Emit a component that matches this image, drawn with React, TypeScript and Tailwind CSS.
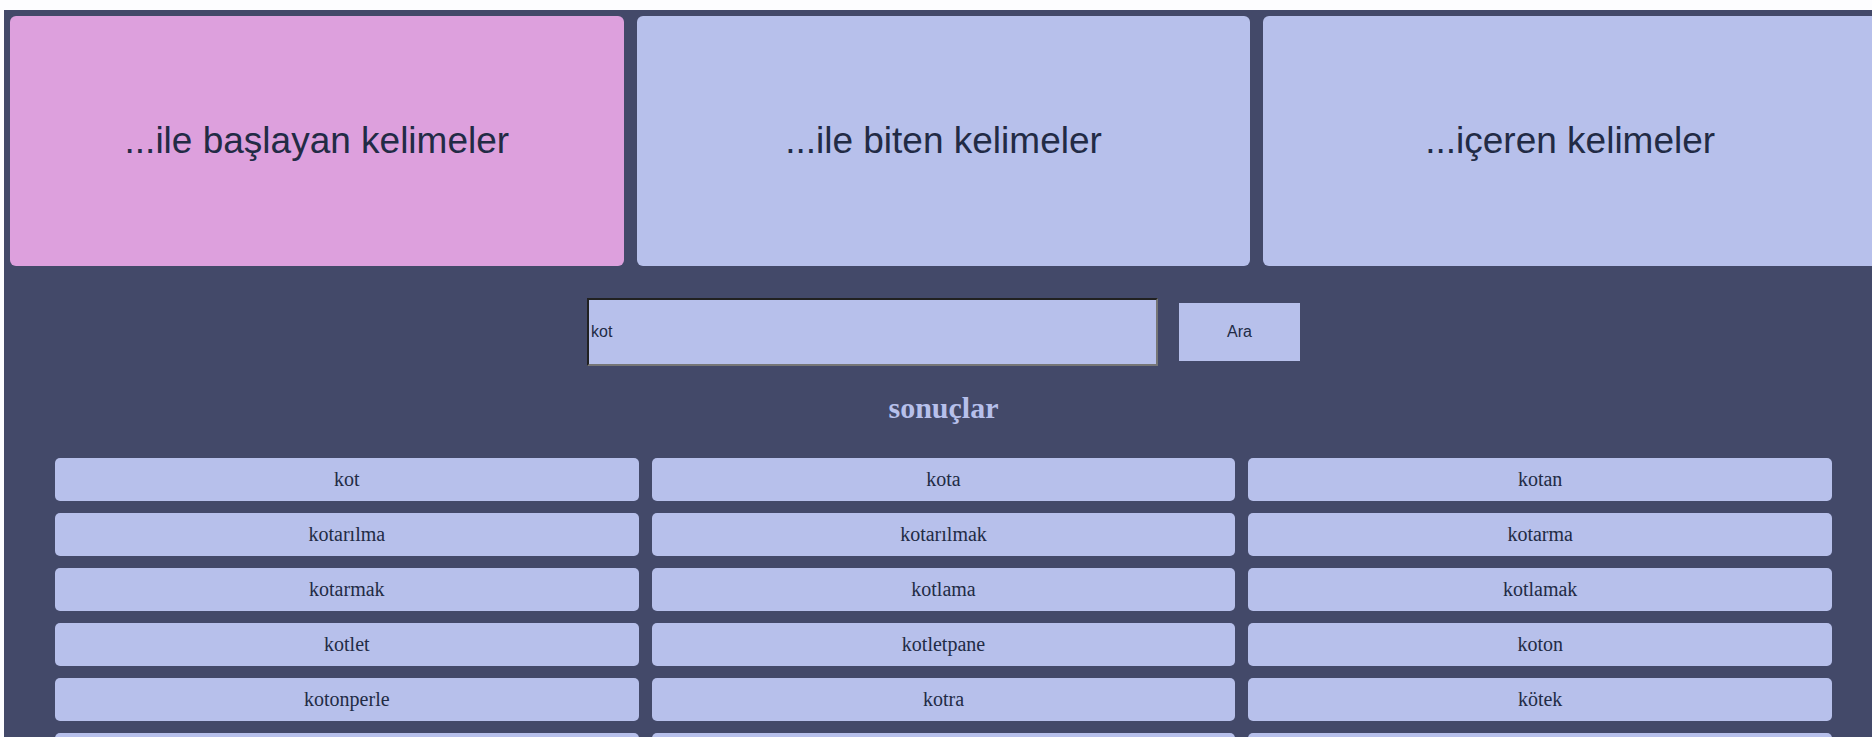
import { useState } from "react";

const modes = ["...ile başlayan kelimeler", "...ile biten kelimeler", "...içeren kelimeler"];

const words = [
  "kot", "kota", "kotan",
  "kotarılma", "kotarılmak", "kotarma",
  "kotarmak", "kotlama", "kotlamak",
  "kotlet", "kotletpane", "koton",
  "kotonperle", "kotra", "kötek",
  "kötü", "kötücül", "kötüleme",
];

export default function App() {
  const [mode, setMode] = useState(0);
  const [query, setQuery] = useState("kot");

  return (
    <div className="min-h-screen overflow-x-clip bg-[#fdfdff] pt-[10px] pl-1">
      <main className="-mr-[11px] min-h-full bg-[#434969] p-1.5 font-['Liberation_Serif',serif] text-[#222b45]">
        <div className="grid grid-cols-3 gap-[13px] font-['Liberation_Sans',sans-serif]">
          {modes.map((label, i) => (
            <button
              key={label}
              type="button"
              aria-pressed={mode === i}
              onClick={() => setMode(i)}
              className={`h-[250px] rounded-md text-[37px] ${mode === i ? "bg-[#dda0dd]" : "bg-[#b7c0eb]"}`}
            >
              {label}
            </button>
          ))}
        </div>

        <form
          onSubmit={(e) => e.preventDefault()}
          className="mt-8 flex items-center justify-center gap-[21px] font-['Liberation_Sans',sans-serif] text-base"
        >
          <input
            type="text"
            aria-label="Kelime"
            value={query}
            onChange={(e) => setQuery(e.target.value)}
            className="h-[68px] w-[571px] border-2 border-[#767676] bg-[#b7c0eb] px-0.5 [border-style:inset] focus:outline-none"
          />
          <button type="submit" className="h-[58px] w-[121px] bg-[#b7c0eb]">
            Ara
          </button>
        </form>

        <h1 className="mt-[25px] text-center text-[30px] leading-[34px] font-bold text-[#b7c0eb]">sonuçlar</h1>

        <ul className="mx-[45px] mt-[33px] grid grid-cols-3 gap-x-[13px] gap-y-3">
          {words.map((word) => (
            <li key={word} className="rounded-[5px] bg-[#b7c0eb] py-2.5 text-center text-xl leading-[23px]">
              {word}
            </li>
          ))}
        </ul>
      </main>
    </div>
  );
}
